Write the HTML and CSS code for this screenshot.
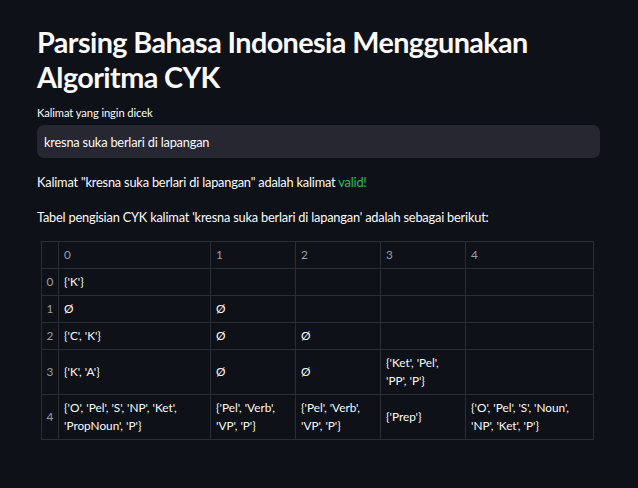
FILE: index.html
```html
<!DOCTYPE html>
<html lang="id">
<head>
  <meta charset="UTF-8">
  <meta name="viewport" content="width=device-width, initial-scale=1.0">
  <title>Parsing Bahasa Indonesia | CYK</title>
  <link rel="stylesheet" href="styles.css">
</head>
<body>
  <main class="page">
    <h1 class="title">Parsing Bahasa Indonesia Menggunakan Algoritma CYK</h1>

    <!-- Input kalimat -->
    <label class="field-label" for="kalimat">Kalimat yang ingin dicek</label>
    <input class="text-input" type="text" id="kalimat" value="kresna suka berlari di lapangan">

    <p class="text">Kalimat "kresna suka berlari di lapangan" adalah kalimat <span class="valid">valid!</span></p>
    <p class="text">Tabel pengisian CYK kalimat 'kresna suka berlari di lapangan' adalah sebagai berikut:</p>

    <!-- Tabel CYK -->
    <table class="cyk-table">
      <colgroup>
        <col class="col-idx">
        <col class="col-0">
        <col class="col-1">
        <col class="col-2">
        <col class="col-3">
        <col class="col-4">
      </colgroup>
      <thead>
        <tr><th class="idx"></th><th>0</th><th>1</th><th>2</th><th>3</th><th>4</th></tr>
      </thead>
      <tbody>
        <tr><th class="idx">0</th><td>{'K'}</td><td></td><td></td><td></td><td></td></tr>
        <tr><th class="idx">1</th><td>Ø</td><td>Ø</td><td></td><td></td><td></td></tr>
        <tr><th class="idx">2</th><td>{'C', 'K'}</td><td>Ø</td><td>Ø</td><td></td><td></td></tr>
        <tr><th class="idx">3</th><td>{'K', 'A'}</td><td>Ø</td><td>Ø</td><td>{'Ket', 'Pel', 'PP', 'P'}</td><td></td></tr>
        <tr><th class="idx">4</th><td>{'O', 'Pel', 'S', 'NP', 'Ket', 'PropNoun', 'P'}</td><td>{'Pel', 'Verb', 'VP', 'P'}</td><td>{'Pel', 'Verb', 'VP', 'P'}</td><td>{'Prep'}</td><td>{'O', 'Pel', 'S', 'Noun', 'NP', 'Ket', 'P'}</td></tr>
      </tbody>
    </table>
  </main>
</body>
</html>
```

FILE: styles.css
```css
body {
  margin: 0;
  background: #0e1117;
  color: #fafafa;
  font-family: 'Lato', 'Noto Sans', sans-serif;
  font-size: 12.8px;
  height: 100vh;
}
.page {
  padding: 25px 38px 0 37px;
}
.title {
  margin: 0;
  font-size: 28.8px;
  line-height: 1.2;
  font-weight: 700;
  letter-spacing: -0.6px;
}
.field-label {
  display: block;
  margin-top: 11px;
  font-size: 11.2px;
  line-height: 16px;
  letter-spacing: -0.1px;
}
.text-input {
  display: block;
  box-sizing: border-box;
  width: 100%;
  height: 33px;
  margin-top: 4px;
  padding: 0 7px;
  border: none;
  border-radius: 7px;
  background: #262730;
  color: #fafafa;
  font-family: inherit;
  font-size: 12.8px;
  letter-spacing: -0.2px;
  outline: none;
}
.text {
  margin: 14px 0 0;
  line-height: 20.5px;
  letter-spacing: -0.2px;
}
.valid {
  color: #29bf55;
}
.cyk-table {
  table-layout: fixed;
  border-collapse: collapse;
  width: 553px;
  margin: 14px 0 0 4px;
  font-size: 11.8px;
  line-height: 18px;
}
.cyk-table th,
.cyk-table td {
  border: 1px solid #2b2e36;
  padding: 4px 5px;
  text-align: left;
  vertical-align: middle;
  font-weight: 400;
}
.cyk-table thead th {
  color: #9c9ea4;
}
.cyk-table th.idx {
  padding: 4px 0;
  text-align: center;
  color: #9c9ea4;
}
.col-idx { width: 17px; }
.col-0 { width: 152px; }
.col-1 { width: 85px; }
.col-2 { width: 85px; }
.col-3 { width: 85px; }
.col-4 { width: 128px; }
```
